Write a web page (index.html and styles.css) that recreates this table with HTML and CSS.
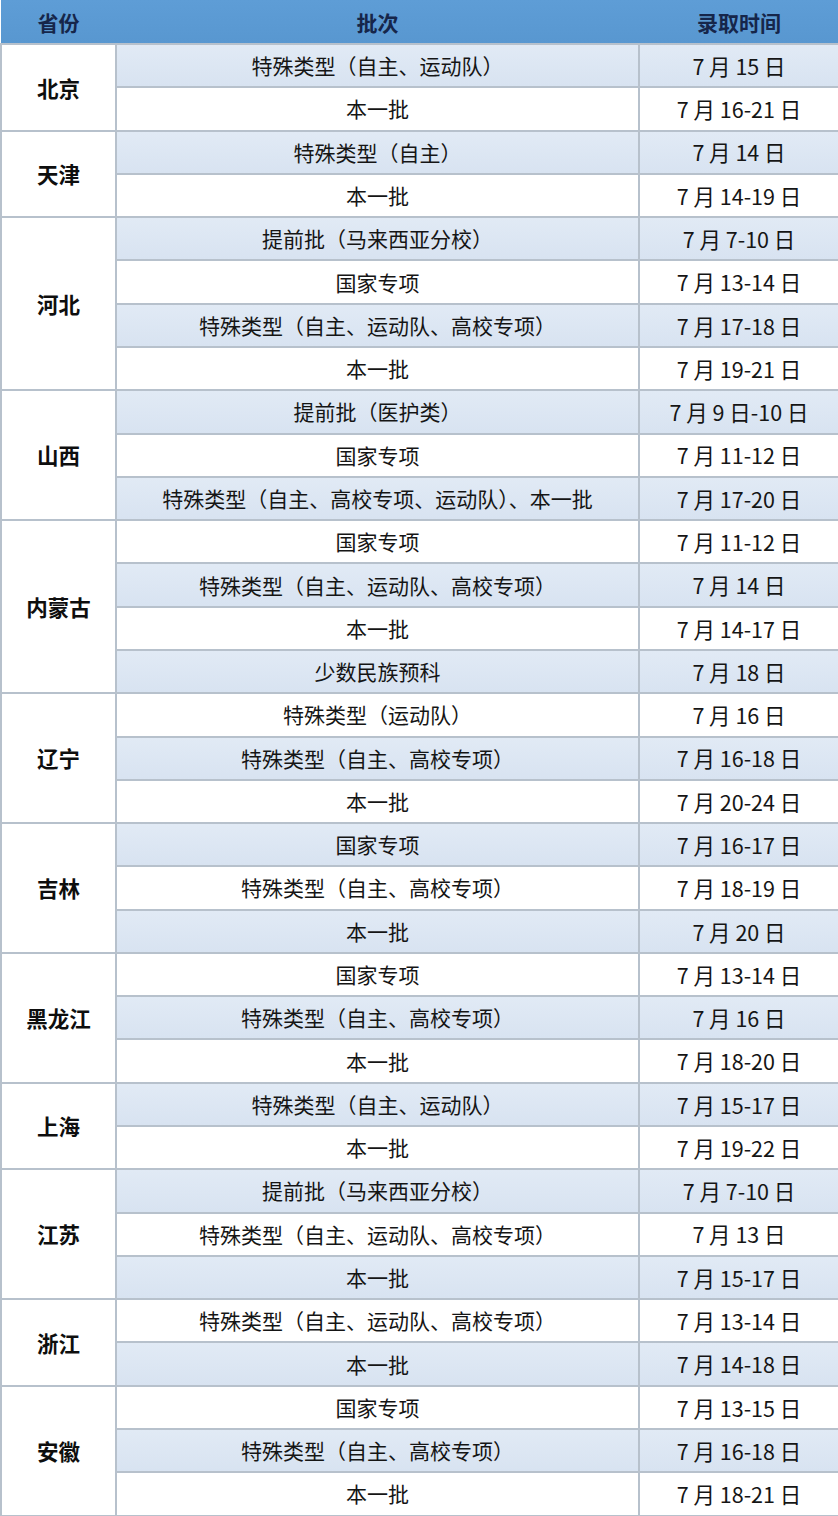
FILE: index.html
```html
<!DOCTYPE html>
<html lang="zh">
<head>
<meta charset="utf-8">
<title>录取时间</title>
<link rel="stylesheet" href="styles.css">
</head>
<body>
<table class="admit">
  <colgroup>
    <col class="c-prov">
    <col class="c-batch">
    <col class="c-time">
  </colgroup>
  <thead>
    <tr class="head">
      <th>省份</th>
      <th>批次</th>
      <th>录取时间</th>
    </tr>
  </thead>
  <tbody>
    <tr class="b"><td class="prov" rowspan="2">北京</td><td>特殊类型（自主、运动队）</td><td class="t">7 月 15 日</td></tr>
    <tr class="w"><td>本一批</td><td class="t">7 月 16-21 日</td></tr>

    <tr class="b"><td class="prov" rowspan="2">天津</td><td>特殊类型（自主）</td><td class="t">7 月 14 日</td></tr>
    <tr class="w"><td>本一批</td><td class="t">7 月 14-19 日</td></tr>

    <tr class="b"><td class="prov" rowspan="4">河北</td><td>提前批（马来西亚分校）</td><td class="t">7 月 7-10 日</td></tr>
    <tr class="w"><td>国家专项</td><td class="t">7 月 13-14 日</td></tr>
    <tr class="b"><td>特殊类型（自主、运动队、高校专项）</td><td class="t">7 月 17-18 日</td></tr>
    <tr class="w"><td>本一批</td><td class="t">7 月 19-21 日</td></tr>

    <tr class="b"><td class="prov" rowspan="3">山西</td><td>提前批（医护类）</td><td class="t">7 月 9 日-10 日</td></tr>
    <tr class="w"><td>国家专项</td><td class="t">7 月 11-12 日</td></tr>
    <tr class="b"><td>特殊类型（自主、高校专项、运动队）、本一批</td><td class="t">7 月 17-20 日</td></tr>

    <tr class="w"><td class="prov" rowspan="4">内蒙古</td><td>国家专项</td><td class="t">7 月 11-12 日</td></tr>
    <tr class="b"><td>特殊类型（自主、运动队、高校专项）</td><td class="t">7 月 14 日</td></tr>
    <tr class="w"><td>本一批</td><td class="t">7 月 14-17 日</td></tr>
    <tr class="b"><td>少数民族预科</td><td class="t">7 月 18 日</td></tr>

    <tr class="w"><td class="prov" rowspan="3">辽宁</td><td>特殊类型（运动队）</td><td class="t">7 月 16 日</td></tr>
    <tr class="b"><td>特殊类型（自主、高校专项）</td><td class="t">7 月 16-18 日</td></tr>
    <tr class="w"><td>本一批</td><td class="t">7 月 20-24 日</td></tr>

    <tr class="b"><td class="prov" rowspan="3">吉林</td><td>国家专项</td><td class="t">7 月 16-17 日</td></tr>
    <tr class="w"><td>特殊类型（自主、高校专项）</td><td class="t">7 月 18-19 日</td></tr>
    <tr class="b"><td>本一批</td><td class="t">7 月 20 日</td></tr>

    <tr class="w"><td class="prov" rowspan="3">黑龙江</td><td>国家专项</td><td class="t">7 月 13-14 日</td></tr>
    <tr class="b"><td>特殊类型（自主、高校专项）</td><td class="t">7 月 16 日</td></tr>
    <tr class="w"><td>本一批</td><td class="t">7 月 18-20 日</td></tr>

    <tr class="b"><td class="prov" rowspan="2">上海</td><td>特殊类型（自主、运动队）</td><td class="t">7 月 15-17 日</td></tr>
    <tr class="w"><td>本一批</td><td class="t">7 月 19-22 日</td></tr>

    <tr class="b"><td class="prov" rowspan="3">江苏</td><td>提前批（马来西亚分校）</td><td class="t">7 月 7-10 日</td></tr>
    <tr class="w"><td>特殊类型（自主、运动队、高校专项）</td><td class="t">7 月 13 日</td></tr>
    <tr class="b"><td>本一批</td><td class="t">7 月 15-17 日</td></tr>

    <tr class="w"><td class="prov" rowspan="2">浙江</td><td>特殊类型（自主、运动队、高校专项）</td><td class="t">7 月 13-14 日</td></tr>
    <tr class="b"><td>本一批</td><td class="t">7 月 14-18 日</td></tr>

    <tr class="w"><td class="prov" rowspan="3">安徽</td><td>国家专项</td><td class="t">7 月 13-15 日</td></tr>
    <tr class="b"><td>特殊类型（自主、高校专项）</td><td class="t">7 月 16-18 日</td></tr>
    <tr class="w"><td>本一批</td><td class="t">7 月 18-21 日</td></tr>
  </tbody>
</table>
</body>
</html>
```
FILE: styles.css
```css
html, body {
  margin: 0;
  padding: 0;
  background: #ffffff;
}

body {
  font-family: "Noto Sans CJK SC", "Noto Sans", sans-serif;
  color: #151515;
  width: 838px;
  height: 1516px;
  overflow: hidden;
}

.admit {
  width: 838px;
  height: 1516px;
  border-collapse: collapse;
  table-layout: fixed;
}

.c-prov { width: 115px; }
.c-batch { width: 523px; }
.c-time { width: 200px; }

.head {
  height: 44px;
  background: linear-gradient(#5e9dd6, #5897d0);
}

.head th {
  color: #16264a;
  font-size: 21px;
  font-weight: 700;
  text-align: center;
  padding: 0;
  border: none;
  border-bottom: 2px solid #b7c1cc;
}

tbody tr {
  height: 43.29px;
}

tbody td {
  border: 2px solid #b7c1cc;
  text-align: center;
  font-size: 21px;
  font-weight: 400;
  padding: 0;
  line-height: 1;
}

tbody td.t {
  font-size: 21.5px;
}

tr.b td {
  background: linear-gradient(#e1eaf5, #d8e3f1);
}

tr.w td {
  background: #ffffff;
}

tbody td.prov {
  background: #ffffff;
  font-weight: 700;
  font-size: 21.5px;
  color: #0e0e0e;
}
```
